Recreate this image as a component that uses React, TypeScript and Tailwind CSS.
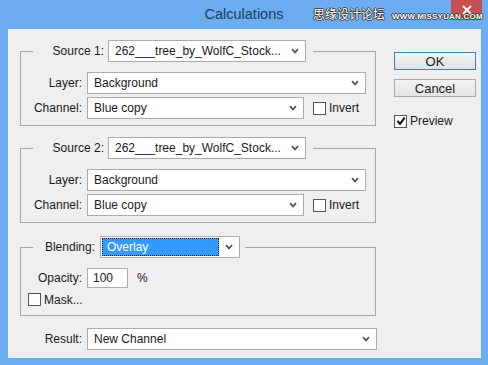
import clsx from "clsx";

function Chevron() {
  return (
    <svg width="8" height="6" viewBox="0 0 8 6">
      <path d="M1 1.2 L4 4.4 L7 1.2" stroke="#555" strokeWidth="1.7" fill="none" />
    </svg>
  );
}

function Select({
  value,
  className,
  focused,
}: {
  value: string;
  className?: string;
  focused?: boolean;
}) {
  return (
    <div
      className={clsx(
        "flex h-[22px] shrink-0 items-center border border-[#acacac] bg-white",
        className,
      )}
    >
      {focused ? (
        <span className="ml-[1px] flex h-[18px] flex-1 items-center border border-dotted border-[#1a1a1a] bg-[#3399ff] pl-[4px] text-white">
          {value}
        </span>
      ) : (
        <span className="flex-1 truncate pl-[6px]">{value}</span>
      )}
      <span className="flex w-[20px] justify-center">
        <Chevron />
      </span>
    </div>
  );
}

function Checkbox({ checked }: { checked?: boolean }) {
  return (
    <span className="flex h-[13px] w-[13px] shrink-0 items-center justify-center border border-[#555] bg-white">
      {checked && (
        <svg width="10" height="10" viewBox="0 0 10 10">
          <path d="M1.5 5 L4 7.8 L8.6 1.6" stroke="#111" strokeWidth="2" fill="none" />
        </svg>
      )}
    </span>
  );
}

function Row({ label, children }: { label: string; children: React.ReactNode }) {
  return (
    <div className="flex items-center leading-[16px]">
      <span className="w-[54px] shrink-0 text-right">{label}</span>
      <div className="ml-[5px] flex items-center">{children}</div>
    </div>
  );
}

function SourceGroup({ n, className }: { n: number; className?: string }) {
  return (
    <fieldset className={clsx("w-[356px] border border-[#a6a6a6] pb-[6px] pl-[7px]", className)}>
      <legend className="ml-[5px] flex items-center pr-[7px]">
        <span className="w-[71px] text-right">Source {n}:</span>
        <Select value="262___tree_by_WolfC_Stock..." className="ml-[4px] w-[198px]" />
      </legend>
      <div className="flex flex-col gap-[3px] pt-[10px]">
        <Row label="Layer:">
          <Select value="Background" className="w-[279px]" />
        </Row>
        <Row label="Channel:">
          <Select value="Blue copy" className="w-[217px]" />
          <span className="ml-[9px]">
            <Checkbox />
          </span>
          <span className="ml-[3px]">Invert</span>
        </Row>
      </div>
    </fieldset>
  );
}

export default function App() {
  return (
    <div className="flex h-[365px] w-[488px] flex-col bg-[#6badf0] font-['Liberation_Sans',Arial,sans-serif] text-[12px] leading-[16px] text-[#1a1a1a]">
      <div className="relative flex h-[29px] shrink-0 items-center justify-center">
        <span className="-mt-[1px] text-[14.5px] text-[#1e3a5c]">Calculations</span>
        <span className="absolute left-[313px] top-[6px] font-['Noto_Sans_CJK_SC',sans-serif] text-[12px] leading-[16px] text-white [text-shadow:1px_0_0_#3a3a3a,-1px_0_0_#3a3a3a,0_1px_0_#3a3a3a,0_-1px_0_#3a3a3a]">
          思缘设计论坛
        </span>
        <div className="absolute right-[6px] top-0 flex h-[20px] w-[31px] items-center justify-center bg-[#c75050]">
          <svg width="10" height="10" viewBox="0 0 10 10">
            <path d="M1 1 L9 9 M9 1 L1 9" stroke="#fff" strokeWidth="1.8" />
          </svg>
        </div>
        <span className="absolute left-[392px] top-[12px] text-[8px] font-bold leading-[9px] tracking-[0.2px] text-white [text-shadow:1px_0_0_#3a3a3a,-1px_0_0_#3a3a3a,0_1px_0_#3a3a3a,0_-1px_0_#3a3a3a]">
          WWW.MISSYUAN.COM
        </span>
      </div>

      <div className="mb-[7px] ml-[8px] mr-[7px] flex flex-1 bg-[#efefef]">
        <div className="flex w-[370px] shrink-0 flex-col pl-[12px] pt-[11px]">
          <SourceGroup n={1} />
          <SourceGroup n={2} className="mt-[11px]" />

          <fieldset className="mt-[13px] w-[356px] border border-[#a6a6a6] pb-[9px] pl-[7px]">
            <legend className="ml-[5px] flex items-center pr-[5px]">
              <span className="w-[62px] text-right">Blending:</span>
              <Select value="Overlay" focused className="ml-[5px] w-[140px]" />
            </legend>
            <div className="flex flex-col gap-[5px] pt-[10px]">
              <Row label="Opacity:">
                <div className="flex h-[20px] w-[41px] items-center border border-[#acacac] bg-white pl-[5px]">
                  100
                </div>
                <span className="ml-[9px]">%</span>
              </Row>
              <div className="flex h-[13px] items-center">
                <Checkbox />
                <span className="ml-[3px]">Mask...</span>
              </div>
            </div>
          </fieldset>

          <div className="ml-[8px] mt-[12px]">
            <Row label="Result:">
              <Select value="New Channel" className="w-[290px]" />
            </Row>
          </div>
        </div>

        <div className="ml-[16px] flex w-[82px] flex-col pt-[23px]">
          <button className="h-[18px] w-[82px] border border-[#3c7fb1] bg-gradient-to-b from-[#f3f3f3] to-[#e3e3e3] text-[13px] leading-none">
            OK
          </button>
          <button className="mt-[9px] h-[18px] w-[82px] border border-[#acacac] bg-gradient-to-b from-[#f3f3f3] to-[#e3e3e3] text-[13px] leading-none">
            Cancel
          </button>
          <div className="mt-[16px] flex items-center">
            <Checkbox checked />
            <span className="ml-[3px]">Preview</span>
          </div>
        </div>
      </div>
    </div>
  );
}
